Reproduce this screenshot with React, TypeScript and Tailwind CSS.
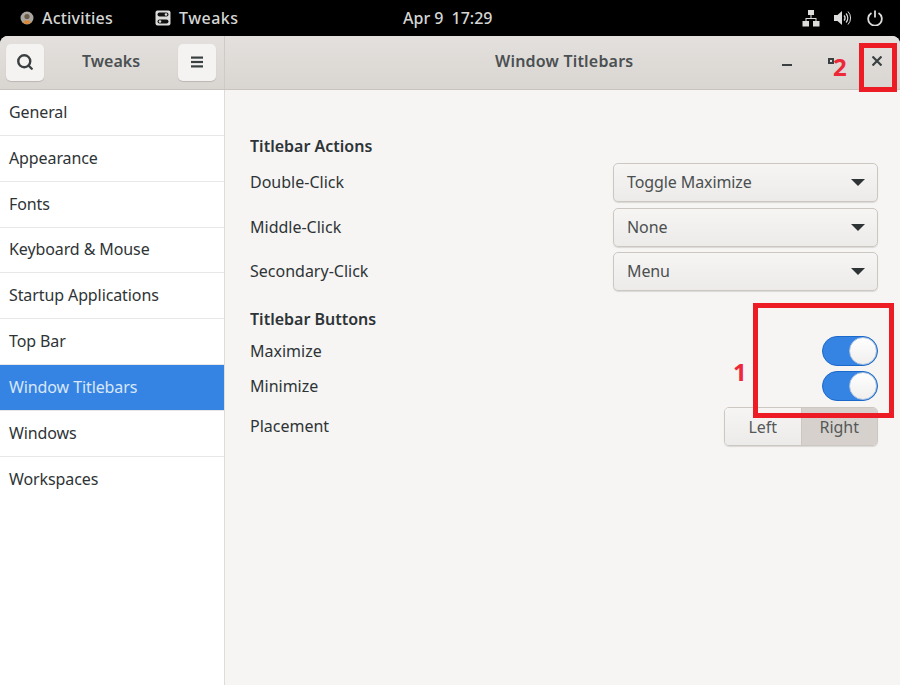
import { Search } from 'lucide-react';

const font = { fontFamily: '"Noto Sans", sans-serif' };

const sidebarItems = [
  'General',
  'Appearance',
  'Fonts',
  'Keyboard & Mouse',
  'Startup Applications',
  'Top Bar',
  'Window Titlebars',
  'Windows',
  'Workspaces',
];

function Dropdown({ label }: { label: string }) {
  return (
    <div className="flex h-[39px] w-[265px] items-center justify-between rounded-[5px] border border-[#cdc7c2] bg-gradient-to-b from-[#f6f5f4] to-[#edebe9] pb-[1px] pl-[13px] pr-[12px] text-[#4a4f50] shadow-[0_1px_1px_rgba(0,0,0,0.12)]">
      <span className="tracking-[-0.1px]">{label}</span>
      <span className="h-0 w-0 border-x-[7px] border-t-[7px] border-x-transparent border-t-[#2e3436]" />
    </div>
  );
}

function Toggle() {
  return (
    <div className="flex h-[30px] w-[56px] items-center justify-end rounded-full border border-[#1b6acb] bg-[#3584e4]">
      <div className="h-[28px] w-[28px] rounded-full border border-[#a9bfd9] bg-gradient-to-b from-white to-[#f0efee]" />
    </div>
  );
}

export default function App() {
  return (
    <div className="relative h-[685px] w-[900px] overflow-hidden bg-black text-[16px]" style={font}>
      {/* top bar */}
      <div className="flex h-[36px] items-center justify-between bg-black text-[#d6d6d4]">
        <div className="flex items-center font-medium">
          <svg className="ml-[20px]" width="14" height="14" viewBox="0 0 14 14">
            <circle cx="7" cy="7" r="6.5" fill="#a9a5a0" />
            <circle cx="7" cy="5.5" r="2.6" fill="#6a5a48" />
            <path d="M3 11.5c1-3 7-3 8 0a6 6 0 0 1-8 0z" fill="#d98a3c" />
          </svg>
          <span className="ml-[8px] tracking-[0.2px]">Activities</span>
          <svg className="ml-[42px]" width="16" height="16" viewBox="0 0 16 16">
            <rect x="0.5" y="0.5" width="15" height="15" rx="2" fill="#dcdcda" />
            <rect x="2.5" y="2.5" width="11" height="4" rx="2" fill="#111" />
            <rect x="2.5" y="9.5" width="11" height="4" rx="2" fill="#111" />
            <circle cx="11" cy="4.5" r="1.3" fill="#dcdcda" />
            <circle cx="5" cy="11.5" r="1.3" fill="#dcdcda" />
          </svg>
          <span className="ml-[8px] tracking-[0.5px]">Tweaks</span>
        </div>
        <div className="absolute left-[403px] top-0 flex h-[36px] items-center gap-[8px] font-medium">
          <span>Apr 9</span>
          <span>17:29</span>
        </div>
        <div className="flex items-center pr-[17px]">
          <svg width="18" height="18" viewBox="0 0 18 18" fill="#dcdcda">
            <rect x="6" y="1" width="6" height="5" />
            <rect x="0.5" y="12" width="6.5" height="5.5" />
            <rect x="11" y="12" width="6.5" height="5.5" />
            <path d="M8.5 6h1v3h5v3h-1v-2h-9v2h-1V9h5z" />
          </svg>
          <svg className="ml-[14px]" width="17" height="16" viewBox="0 0 17 16" fill="none" stroke="#dcdcda">
            <path d="M0 5h3.5L8 1v14l-4.5-4H0z" fill="#dcdcda" stroke="none" />
            <path d="M10 5.5a3.5 3.5 0 0 1 0 5" strokeWidth="1.4" />
            <path d="M12 3.5a6.5 6.5 0 0 1 0 9" strokeWidth="1.2" />
            <path d="M14 1.5a9.5 9.5 0 0 1 0 13" strokeWidth="1" />
          </svg>
          <svg className="ml-[16px]" width="16" height="16" viewBox="0 0 16 16" fill="none" stroke="#dcdcda" strokeWidth="1.8">
            <path d="M4.5 3a6.8 6.8 0 1 0 7 0" />
            <path d="M8 0.5v7" />
          </svg>
        </div>
      </div>

      {/* window */}
      <div className="flex h-[649px] flex-col overflow-hidden rounded-t-[8px] bg-[#f6f5f4]">
        <div className="flex h-[54px] border-b border-[#c8c3be] bg-gradient-to-b from-[#e3e0dd] to-[#d9d6d2]">
          <div className="flex w-[225px] items-center justify-between border-r border-[#cfcac5] pb-[1px] pl-[6px] pr-[8px]">
            <div className="flex h-[37px] w-[38px] items-center justify-center rounded-[5px] bg-[#f4f3f1] shadow-[0_1px_1px_rgba(0,0,0,0.15)]">
              <Search size={18} strokeWidth={3.2} color="#3a4042" />
            </div>
            <span className="pb-[2px] font-semibold text-[#4b5052]">Tweaks</span>
            <div className="flex h-[37px] w-[38px] items-center justify-center rounded-[5px] bg-[#f4f3f1] shadow-[0_1px_1px_rgba(0,0,0,0.15)]">
              <svg width="12" height="12" viewBox="0 0 12 12" fill="#3a4042">
                <rect x="0" y="0.5" width="12" height="2.2" />
                <rect x="0" y="4.9" width="12" height="2.2" />
                <rect x="0" y="9.3" width="12" height="2.2" />
              </svg>
            </div>
          </div>
          <div className="relative flex flex-1 items-center pb-[3px]">
            <span className="ml-[270px] font-semibold tracking-[0.2px] text-[#4b5052]">Window Titlebars</span>
            <div className="absolute left-[557px] top-[28px] h-[2px] w-[10px] bg-[#3a4042]" />
            <div className="absolute left-[603px] top-[22px] h-[6px] w-[6px] border-2 border-[#3a4042]" />
            <svg className="absolute left-[647px] top-[20px]" width="10" height="10" viewBox="0 0 10 10" stroke="#3a4042" strokeWidth="2.2">
              <path d="M0.5 0.5l9 9M9.5 0.5l-9 9" />
            </svg>
          </div>
        </div>

        <div className="flex flex-1">
          <div className="w-[225px] border-r border-[#dedbd8] bg-white">
            {sidebarItems.map((item, i) => (
              <div
                key={item}
                className={`flex h-[45.85px] items-center pb-[1px] pl-[9px] tracking-[-0.1px] ${
                  i === sidebarItems.length - 1 ? 'pb-[2px]' : 'border-b'
                } ${
                  item === 'Window Titlebars'
                    ? 'border-[#e6e6e6] bg-[#3584e4] text-[#d9e7f9]'
                    : 'border-[#e9e8e7] text-[#2e3436]'
                }`}
              >
                {item}
              </div>
            ))}
          </div>

          <div className="flex-1 pl-[25px] pr-[22px] text-[#2e3436]">
            <div className="mt-[44px] font-semibold leading-[24px]">Titlebar Actions</div>
            <div className="mt-[5px] flex items-center justify-between">
              <span className="pb-[2px]">Double-Click</span>
              <Dropdown label="Toggle Maximize" />
            </div>
            <div className="mt-[6px] flex items-center justify-between">
              <span className="pb-[2px]">Middle-Click</span>
              <Dropdown label="None" />
            </div>
            <div className="mt-[5px] flex items-center justify-between">
              <span className="pb-[2px]">Secondary-Click</span>
              <Dropdown label="Menu" />
            </div>
            <div className="mt-[16px] font-semibold leading-[24px]">Titlebar Buttons</div>
            <div className="mt-[5px] flex items-center justify-between">
              <span>Maximize</span>
              <Toggle />
            </div>
            <div className="mt-[5px] flex items-center justify-between">
              <span>Minimize</span>
              <Toggle />
            </div>
            <div className="mt-[6px] flex items-center justify-between">
              <span className="pb-[2px]">Placement</span>
              <div className="flex h-[39px] w-[154px] overflow-hidden rounded-[5px] border border-[#cdc7c2] text-[#55595a] shadow-[0_1px_1px_rgba(0,0,0,0.12)]">
                <div className="flex flex-1 items-center justify-center border-r border-[#cdc7c2] bg-gradient-to-b from-[#f6f5f4] to-[#edebe9]">
                  Left
                </div>
                <div className="flex flex-1 items-center justify-center bg-[#d6d1cd]">Right</div>
              </div>
            </div>
          </div>
        </div>
      </div>

      {/* red annotations */}
      <div className="absolute left-[753px] top-[303px] h-[115px] w-[141px] border-[5px] border-[#ed1c24]" />
      <div className="absolute left-[859px] top-[43px] h-[49px] w-[38px] border-[5px] border-[#ed1c24]" />
      <span className="absolute left-[733px] top-[356px] text-[24px] font-bold leading-[32px] text-[#ed2939]">1</span>
      <span className="absolute left-[833px] top-[51px] text-[24px] font-bold leading-[32px] text-[#ed2939]">2</span>
    </div>
  );
}
